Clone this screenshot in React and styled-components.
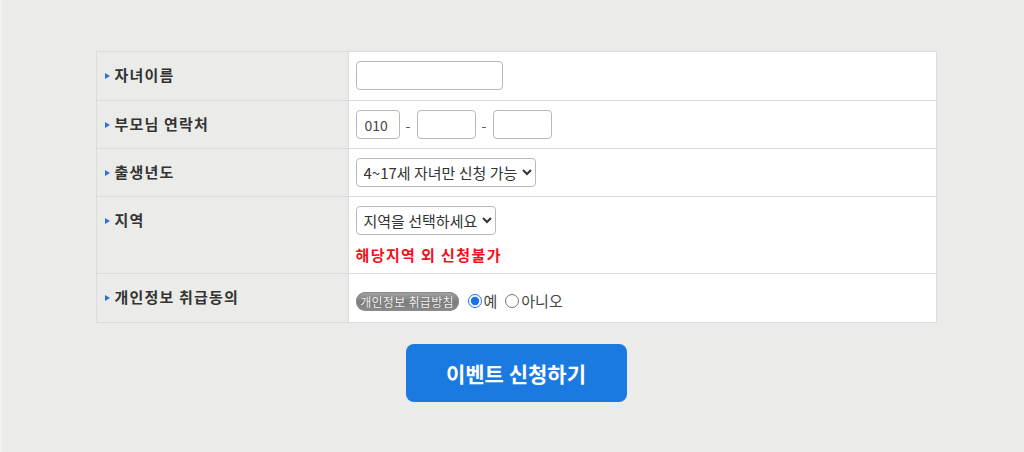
import React from "react";
import styled, { createGlobalStyle } from "styled-components";

const GlobalStyle = createGlobalStyle`
  html, body {
    margin: 0;
    padding: 0;
    background: #ebebe9;
  }
  body {
    font-family: "Noto Sans CJK KR", "Noto Sans", sans-serif;
    color: #333;
  }
`;

const Page = styled.div`
  width: 1024px;
  height: 452px;
  box-sizing: border-box;
  padding: 51px 0 0 6px;
  display: flex;
  flex-direction: column;
  align-items: center;
  border-left: 2px solid #f2f2f1;
`;

const Table = styled.table`
  width: 841px;
  border-collapse: collapse;
  border: 1px solid #dcdcdc;
`;

const Row = styled.tr`
  height: ${(p) => p.h}px;
  border-bottom: 1px solid #dcdcdc;
`;

const Label = styled.th`
  width: 252px;
  box-sizing: border-box;
  background: #ebebe9;
  border-right: 1px solid #dcdcdc;
  text-align: left;
  vertical-align: top;
  padding: 13px 0 0 8px;
  font-size: 15px;
  font-weight: 700;
  letter-spacing: 1.2px;
  line-height: 20px;
  color: #333;
  white-space: nowrap;
`;

const Bullet = styled.span`
  display: inline-block;
  width: 0;
  height: 0;
  border-top: 3px solid transparent;
  border-bottom: 3px solid transparent;
  border-left: 5px solid #2d6fe0;
  margin-right: 5px;
  vertical-align: 2px;
`;

const Cell = styled.td`
  background: #fff;
  vertical-align: top;
  padding: 9px 8px 0 7px;
`;

const Line = styled.div`
  display: flex;
  align-items: center;
  padding-top: ${(p) => p.top || 0}px;
`;

const TextInput = styled.input`
  box-sizing: border-box;
  width: ${(p) => p.w}px;
  height: 29px;
  border: 1px solid #b8b8b8;
  border-radius: 4px;
  padding: 0 8px;
  font-family: "Noto Sans CJK KR", "Noto Sans", sans-serif;
  font-size: 14px;
  color: #444;
  background: #fff;
  outline: none;
`;

const Dash = styled.span`
  font-size: 14px;
  color: #555;
  width: 17px;
  text-align: center;
`;

const Select = styled.select`
  box-sizing: border-box;
  height: 29px;
  border: 1px solid #b8b8b8;
  border-radius: 4px;
  padding: 0 1px 0 3px;
  font-family: "Noto Sans CJK KR", "Noto Sans", sans-serif;
  font-size: 15px;
  color: #333;
  background: #fff;
`;

const Warn = styled.div`
  margin-top: 10px;
  color: #f3101a;
  font-weight: 700;
  font-size: 15px;
  letter-spacing: 1.4px;
  line-height: 20px;
`;

const Badge = styled.span`
  display: inline-flex;
  align-items: center;
  justify-content: center;
  width: 103px;
  height: 19px;
  border-radius: 10px;
  background: linear-gradient(#a4a4a4, #7c7c7c 55%, #8c8c8c);
  box-shadow: inset 0 0 0 1px #8a8a8a;
  color: #f4f4f4;
  font-size: 12px;
  letter-spacing: 0.3px;
  text-shadow: 0 0 1px #555;
  margin-right: 9px;
`;

const Radio = styled.input`
  margin: 0 2px 0 0;
  width: 14px;
  height: 14px;
  accent-color: #1a73e8;
`;

const RadioText = styled.label`
  font-size: 15px;
  color: #444;
  margin-right: 8px;
  line-height: 20px;
`;

const Submit = styled.button`
  margin-top: 21px;
  width: 221px;
  height: 58px;
  border: none;
  border-radius: 8px;
  background: #1a7ae0;
  color: #fff;
  font-family: "Noto Sans CJK KR", "Noto Sans", sans-serif;
  font-size: 21px;
  font-weight: 700;
  cursor: pointer;
`;

export default function App() {
  return (
    <>
      <GlobalStyle />
      <Page>
        <Table>
          <tbody>
            <Row h={49}>
              <Label><Bullet />자녀이름</Label>
              <Cell>
                <TextInput w={147} />
              </Cell>
            </Row>
            <Row h={48}>
              <Label><Bullet />부모님 연락처</Label>
              <Cell>
                <Line>
                  <TextInput w={44} defaultValue="010" />
                  <Dash>-</Dash>
                  <TextInput w={59} />
                  <Dash>-</Dash>
                  <TextInput w={59} />
                </Line>
              </Cell>
            </Row>
            <Row h={48}>
              <Label><Bullet />출생년도</Label>
              <Cell>
                <Select>
                  <option>4~17세 자녀만 신청 가능</option>
                </Select>
              </Cell>
            </Row>
            <Row h={77}>
              <Label><Bullet />지역</Label>
              <Cell>
                <Select>
                  <option>지역을 선택하세요</option>
                </Select>
                <Warn>해당지역 외 신청불가</Warn>
              </Cell>
            </Row>
            <Row h={49}>
              <Label><Bullet />개인정보 취급동의</Label>
              <Cell>
                <Line top={8}>
                  <Badge>개인정보 취급방침</Badge>
                  <Radio type="radio" name="agree" id="yes" defaultChecked />
                  <RadioText htmlFor="yes">예</RadioText>
                  <Radio type="radio" name="agree" id="no" />
                  <RadioText htmlFor="no">아니오</RadioText>
                </Line>
              </Cell>
            </Row>
          </tbody>
        </Table>
        <Submit>이벤트 신청하기</Submit>
      </Page>
    </>
  );
}
